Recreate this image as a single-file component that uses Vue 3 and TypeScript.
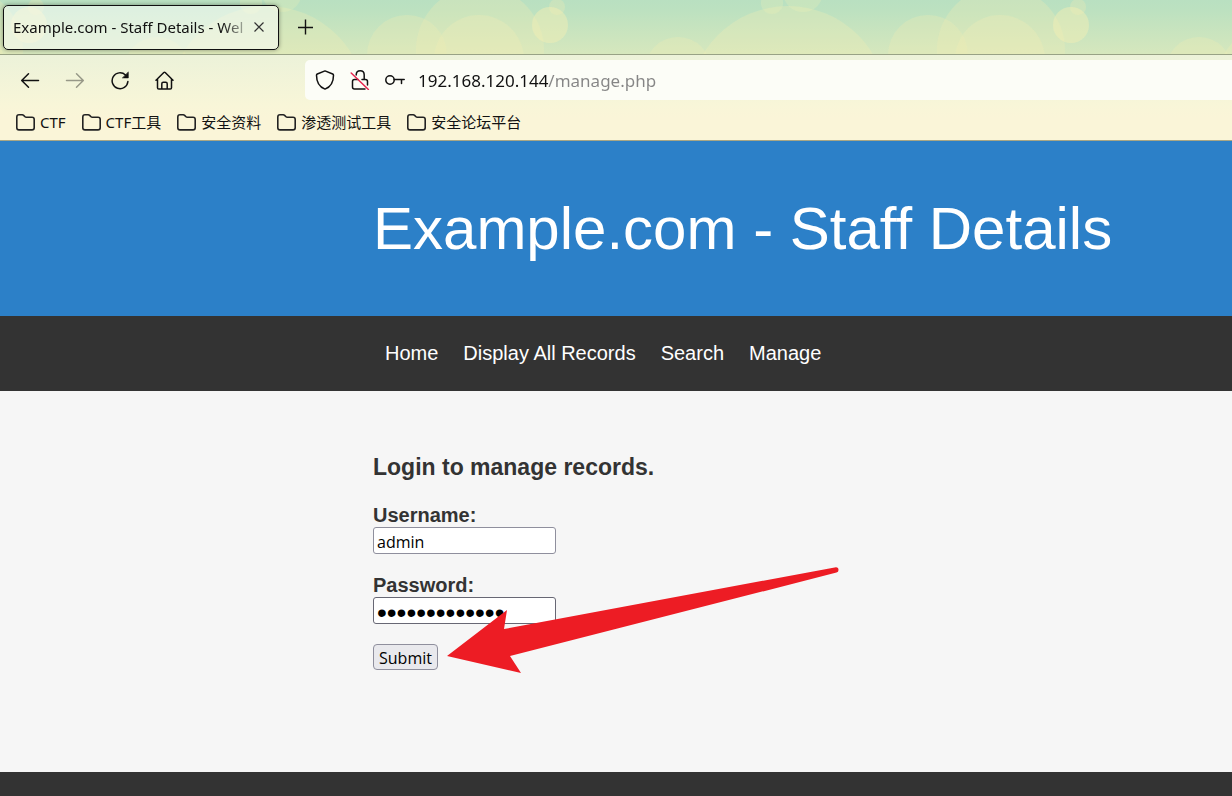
<script setup lang="ts">
import { ref } from 'vue'

interface Bubble {
  x: number
  y: number
  r: number
  o: number
}

const bubbles: Bubble[] = [
  { x: 40, y: 55, r: 40, o: 0.3 },
  { x: 113, y: 50, r: 64, o: 0.3 },
  { x: 112, y: 60, r: 45, o: 0.32 },
  { x: 190, y: 7, r: 8, o: 0.3 },
  { x: 183, y: 25, r: 18, o: 0.48 },
  { x: 311, y: 70, r: 33, o: 0.3 },
  { x: 421, y: 105, r: 99, o: 0.32 },
  { x: 405, y: 3, r: 11, o: 0.25 },
  { x: 436, y: -8, r: 20, o: 0.25 },
]

const bookmarks: string[] = ['CTF', 'CTF工具', '安全资料', '渗透测试工具', '安全论坛平台']
const links: string[] = ['Home', 'Display All Records', 'Search', 'Manage']

const address = ref('192.168.120.144/manage.php')
const username = ref('admin')
const password = ref('administrator')
</script>

<template>
  <div class="window">
    <header class="chrome">
      <svg class="theme" aria-hidden="true">
        <defs>
          <pattern id="bubbles" x="367" y="0" width="521" height="140" patternUnits="userSpaceOnUse">
            <circle v-for="(b, i) in bubbles" :key="i" :cx="b.x" :cy="b.y" :r="b.r" fill="#f1eeb4" :fill-opacity="b.o" />
          </pattern>
        </defs>
        <rect width="100%" height="100%" fill="url(#bubbles)" />
      </svg>

      <div class="tabs">
        <div class="tab">
          <span class="tab-title">Example.com - Staff Details - Wel</span>
          <button class="tab-close" type="button" aria-label="Close tab">
            <svg width="10" height="10" viewBox="0 0 10 10"><path d="M.5.5l9 9M9.500.5l-9 9" stroke="#333" stroke-width="1.200" /></svg>
          </button>
        </div>
        <button class="new-tab" type="button" aria-label="New tab">
          <svg width="16" height="16" viewBox="0 0 16 16"><path d="M8.500.5v15M1 8.500h15" stroke="#111" stroke-width="1.400" /></svg>
        </button>
      </div>

      <div class="toolbar">
        <div class="buttons">
          <button type="button" aria-label="Back">
            <svg viewBox="0 0 20 20"><path d="M18.500 10.500H2M8.500 3.700L1.700 10.500l6.800 6.800" /></svg>
          </button>
          <button type="button" aria-label="Forward" disabled>
            <svg viewBox="0 0 20 20"><path d="M1.500 10.500h16.500M11.500 3.700l6.800 6.800-6.800 6.800" /></svg>
          </button>
          <button type="button" aria-label="Reload">
            <svg viewBox="0 0 20 20">
              <path d="M15.500 5A7.900 7.900 0 1 0 17.900 11.500" />
              <path d="M18.300 2.300v5.600h-5.600z" fill="#111" stroke-width=".6" />
            </svg>
          </button>
          <button type="button" aria-label="Home">
            <svg viewBox="0 0 20 20">
              <path d="M1 10.200l7.800-7.700q.7-.6 1.400 0L18 10.200M2.500 8.800v8.900q0 1.300 1.300 1.300h11.400q1.300 0 1.300-1.300V8.800M6.800 18.700v-5q0-1.500 1.500-1.500h2.400q1.500 0 1.500 1.500v5" />
            </svg>
          </button>
        </div>
        <div class="address">
          <svg viewBox="0 0 20 20" aria-hidden="true">
            <path d="M10 .9L17.700 4q.8.4.8 1.200c0 6-2.200 11.500-8.500 13.900C3.700 16.700 1.500 11.200 1.500 5.200q0-.8.8-1.200z" />
          </svg>
          <svg viewBox="0 0 20 20" aria-hidden="true">
            <path d="M6.200 5q0-4.200 4-4.200T14.200 5v4M8 9.500H4.500Q2.500 9.500 2.500 11.500v5.500q0 2 2 2H15M12 9.500h3.500q2 0 2 2v3.500" />
            <path class="strike" d="M1.200 3l17.200 16.500" />
          </svg>
          <svg viewBox="0 0 20 20" aria-hidden="true">
            <circle cx="5" cy="10" r="4.200" />
            <path d="M9.200 9.500H19.200M16.500 9.500v4" />
          </svg>
          <input v-model="address" class="url" type="text" aria-label="Address" />
        </div>
      </div>

      <nav class="bookmarks" aria-label="Bookmarks">
        <a v-for="name in bookmarks" :key="name" href="#">
          <svg width="19" height="17" viewBox="0 0 19 17" aria-hidden="true">
            <path d="M.8 3Q.8.800 3 .8h3.200q.8 0 1.400.6L9 2.800q.5.500 1.300.500H16q2.200 0 2.200 2.200v8.200q0 2.200-2.200 2.200H3q-2.200 0-2.200-2.200z" />
          </svg>
          <span>{{ name }}</span>
        </a>
      </nav>
    </header>

    <div class="banner">
      <h1>Example.com - Staff Details</h1>
    </div>

    <nav class="menu" aria-label="Site">
      <a v-for="name in links" :key="name" href="#">{{ name }}</a>
    </nav>

    <main>
      <form @submit.prevent>
        <h3>Login to manage records.</h3>
        <div class="field">
          <label for="username">Username:</label>
          <input id="username" v-model="username" type="text" />
        </div>
        <div class="field">
          <label for="password">Password:</label>
          <input id="password" v-model="password" type="password" />
        </div>
        <button class="submit" type="submit">Submit</button>
        <svg class="arrow" width="393" height="108" viewBox="447 566 393 108" aria-hidden="true">
          <path d="M447 656L507 610L504 629L836 567.200Q838.500 567.200 838.500 570Q838.500 572 836.500 572.600L510 656L521 673Z" fill="#ed1c24" />
        </svg>
      </form>
    </main>

    <footer></footer>
  </div>
</template>

<style>
body {
  margin: 0;
}
</style>

<style scoped>
.window {
  display: flex;
  flex-direction: column;
  min-height: 100vh;
  overflow: hidden;
  background: #f6f6f6;
  font-family: "Liberation Sans", Arial, sans-serif;
}

button,
input {
  box-sizing: border-box;
  margin: 0;
  outline: none;
}

a {
  text-decoration: none;
}

.chrome {
  position: relative;
  border-bottom: 1px solid #a9a684;
  background: linear-gradient(#b9e0c1 0, #bce1c0 10px, #d6e7bd 54px, #f5f0c4 100px);
  font-family: "Noto Sans", "Noto Sans CJK SC", sans-serif;
  color: #111;
}

.theme {
  position: absolute;
  inset: 0;
  width: 100%;
  height: 54px;
}

.tabs,
.toolbar,
.bookmarks {
  position: relative;
  display: flex;
  align-items: center;
}

.tabs {
  height: 54px;
  border-bottom: 1px solid #98a285;
}

.chrome button {
  display: flex;
  align-items: center;
  justify-content: center;
  padding: 0;
  border: 0;
  background: none;
}

.tab {
  display: flex;
  align-items: center;
  box-sizing: border-box;
  width: 276px;
  height: 45px;
  margin-left: 3px;
  padding: 0 14px 0 9px;
  border: 1px solid #111;
  border-radius: 5px;
  background: rgba(255, 255, 255, 0.5);
  box-shadow: 0 0 4px rgba(0, 0, 0, 0.4);
}

.tab-title {
  flex: 1;
  white-space: nowrap;
  font-size: 15px;
  line-height: 24px;
  mask-image: linear-gradient(to left, transparent, #000 32px);
}

.new-tab {
  width: 32px;
  height: 32px;
  margin-left: 10px;
}

.toolbar {
  height: 50px;
  background: linear-gradient(#ecf2d9, #f8f6d8);
}

.buttons {
  display: flex;
  flex: none;
  gap: 25px;
  width: 285px;
  padding-left: 20px;
}

.toolbar svg {
  flex: none;
  width: 20px;
  height: 20px;
  fill: none;
  stroke: #111;
  stroke-width: 1.5;
  stroke-linecap: round;
  stroke-linejoin: round;
}

.toolbar button:disabled {
  opacity: 0.4;
}

.address {
  display: flex;
  flex: 1;
  align-items: center;
  gap: 15px;
  height: 40px;
  padding-left: 10px;
  border-radius: 5px 0 0 5px;
  background: #fcfdf7;
}

.toolbar .strike {
  stroke: #e8264f;
}

.url {
  flex: 1;
  min-width: 0;
  height: 32px;
  margin-left: -2px;
  padding: 0;
  border: 0;
  background: linear-gradient(to right, #111 130px, #858585 130px);
  background-clip: text;
  -webkit-text-fill-color: transparent;
  font-family: inherit;
  font-size: 17px;
}

.bookmarks {
  gap: 16px;
  height: 35px;
  padding-left: 16px;
  background: linear-gradient(#f8f6d8, #faf5d8 12px);
}

.bookmarks a {
  display: flex;
  align-items: center;
  gap: 5px;
  color: #111;
  font-size: 15px;
  line-height: 22px;
  white-space: nowrap;
}

.bookmarks span {
  padding-bottom: 2px;
}

.bookmarks svg {
  fill: none;
  stroke: #222;
  stroke-width: 1.6;
}

.banner {
  padding: 50px 0 50px 373px;
  background: #2c80c8;
}

h1 {
  margin: 0;
  color: #fff;
  font-size: 60px;
  font-weight: 400;
  line-height: 75px;
  white-space: nowrap;
}

.menu {
  display: flex;
  gap: 25px;
  padding: 25px 0 25px 385px;
  background: #333;
}

.menu a {
  color: #fff;
  font-size: 20px;
  line-height: 25px;
}

main {
  padding: 63px 0 102px 373px;
  color: #333;
}

form {
  position: relative;
}

h3 {
  margin: 0 0 24px;
  font-size: 23px;
  line-height: 26px;
}

.field {
  display: flex;
  flex-direction: column;
  align-items: flex-start;
  margin-bottom: 20px;
}

.field label {
  font-size: 20px;
  font-weight: 700;
  line-height: 23px;
}

.field input {
  width: 183px;
  height: 27px;
  padding: 2px 3px 0;
  border: 1px solid #8f8f9d;
  border-radius: 3px;
  background: #fff;
  color: #000;
  font-family: "Open Sans", sans-serif;
  font-size: 16px;
}

.field #password {
  padding-top: 5px;
  border-color: #676774;
  font-family: "Liberation Sans", sans-serif;
  font-size: 28px;
  line-height: 20px;
}

.submit {
  display: block;
  width: 65px;
  height: 26px;
  padding: 2px 0 0;
  border: 1px solid #8f8f9d;
  border-radius: 4px;
  background: #e9e9ed;
  color: #000;
  font-family: "Open Sans", sans-serif;
  font-size: 16px;
  line-height: 22px;
}

.arrow {
  position: absolute;
  top: 112px;
  left: 74px;
}

footer {
  flex: 1;
  min-height: 24px;
  background: #333;
}
</style>
